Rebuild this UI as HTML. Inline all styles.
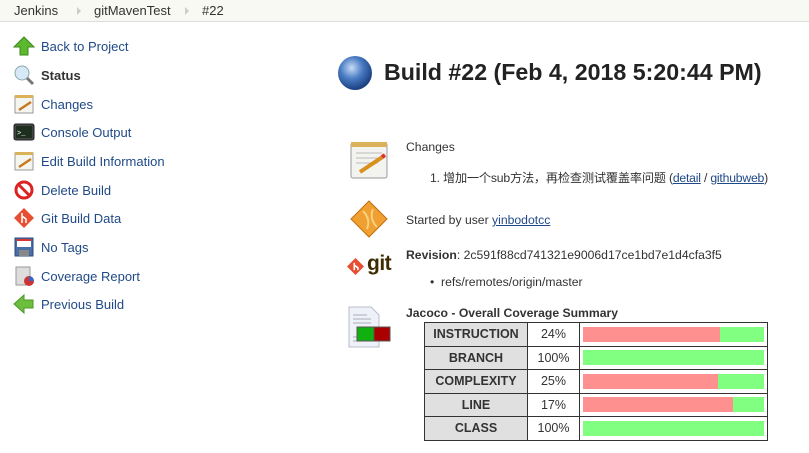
<!DOCTYPE html>
<html><head><meta charset="utf-8"><style>
body{margin:0;width:809px;height:453px;overflow:hidden;background:#fff;font-family:"Liberation Sans","Noto Sans CJK SC",sans-serif;font-size:12.2px;color:#333;position:relative}
.bc{position:absolute;left:0;top:0;width:809px;height:21px;background:#f8f9f3;border-bottom:1px solid #ddd}
.bc span{position:absolute;top:3px;font-size:13px;color:#333}
.bc i{position:absolute;top:7px;width:0;height:0;border-left:4px solid #ccc;border-top:4px solid transparent;border-bottom:4px solid transparent}
.it{position:absolute;left:41px;color:#204a87;font-size:13px}
.ic{position:absolute;left:13px;width:22px;height:22px}
.a{position:absolute}
a{color:#204a87;text-decoration:underline}
table{position:absolute;left:424px;top:322px;border-collapse:collapse;border:1px solid #bbb;table-layout:fixed;width:344px}
td{border:1px solid #333;height:22.5px;padding:0;font-size:12.5px;text-align:center}
td.h{background:#e0e0e0;font-weight:bold;width:102px}
td.p{width:51px}
td.b{padding:0 3px}
.bar{height:15px;background:#80ff80;position:relative}
.bar div{position:absolute;left:0;top:0;height:15px;background:#ff9090}
</style></head><body>
<div class="bc"><span style="left:14px">Jenkins</span><i style="left:77px"></i><span style="left:94px">gitMavenTest</span><i style="left:185px"></i><span style="left:202px">#22</span></div>

<svg class="ic" style="top:35px" viewBox="0 0 22 22"><path d="M11 2 L21 12 H15 V20 H7 V12 H1 Z" fill="#5cb82e" stroke="#3d8a1e"/></svg>
<div class="it" style="top:39px">Back to Project</div>
<svg class="ic" style="top:64px" viewBox="0 0 22 22"><circle cx="9" cy="9" r="7" fill="#d7e8f7" stroke="#8aa"/><path d="M14 14 L20 20" stroke="#777" stroke-width="3"/></svg>
<div class="it" style="top:68px;font-weight:bold;color:#333">Status</div>
<svg class="ic" style="top:93px" viewBox="0 0 22 22"><rect x="2" y="3" width="18" height="17" fill="#f5f5f0" stroke="#999"/><rect x="2" y="2" width="18" height="3" fill="#d9b25a"/><path d="M6 17 L18 9" stroke="#c87a1e" stroke-width="2.5"/></svg>
<div class="it" style="top:97px">Changes</div>
<svg class="ic" style="top:121px" viewBox="0 0 22 22"><rect x="1" y="3" width="20" height="16" rx="2" fill="#444" stroke="#222"/><rect x="3" y="5" width="16" height="12" fill="#1f2f1f"/><text x="4" y="14" font-size="7" fill="#fff" font-family="Liberation Mono">&gt;_</text></svg>
<div class="it" style="top:125px">Console Output</div>
<svg class="ic" style="top:150px" viewBox="0 0 22 22"><rect x="2" y="3" width="18" height="17" fill="#f5f5f0" stroke="#999"/><rect x="2" y="2" width="18" height="3" fill="#d9b25a"/><path d="M6 17 L18 9" stroke="#c87a1e" stroke-width="2.5"/></svg>
<div class="it" style="top:154px">Edit Build Information</div>
<svg class="ic" style="top:179px" viewBox="0 0 22 22"><circle cx="11" cy="11" r="8" fill="#fff" stroke="#d22" stroke-width="3"/><path d="M5 5 L17 17" stroke="#d22" stroke-width="3"/></svg>
<div class="it" style="top:183px">Delete Build</div>
<svg class="ic" style="top:207px" viewBox="0 0 22 22"><path d="M11 1 L21 11 L11 21 L1 11 Z" fill="#e84e31"/><path d="M9 6 V16 M9 9 L13 12 V16" stroke="#fff" stroke-width="1.5" fill="none"/></svg>
<div class="it" style="top:211px">Git Build Data</div>
<svg class="ic" style="top:236px" viewBox="0 0 22 22"><rect x="2" y="2" width="18" height="18" fill="#4a6ea8" stroke="#2c4a7a"/><rect x="4" y="3" width="14" height="8" fill="#fff"/><rect x="4" y="3" width="14" height="2" fill="#d33"/><rect x="6" y="14" width="10" height="6" fill="#888"/></svg>
<div class="it" style="top:240px">No Tags</div>
<svg class="ic" style="top:265px" viewBox="0 0 22 22"><rect x="3" y="2" width="14" height="18" fill="#ddd" stroke="#999"/><circle cx="16" cy="16" r="5" fill="#c33"/><path d="M16 16 L16 11 A5 5 0 0 1 21 16 Z" fill="#36c"/></svg>
<div class="it" style="top:269px">Coverage Report</div>
<svg class="ic" style="top:293px" viewBox="0 0 22 22"><path d="M1 11 L11 2 V7 H20 V15 H11 V20 Z" fill="#6cbf3c" stroke="#4a9a26"/></svg>
<div class="it" style="top:297px">Previous Build</div>

<svg class="a" style="left:337px;top:55px" width="36" height="36" viewBox="0 0 36 36"><defs><radialGradient id="g" cx="40%" cy="35%" r="65%"><stop offset="0" stop-color="#c8dcf5"/><stop offset=".5" stop-color="#4a7cc4"/><stop offset="1" stop-color="#1a3f80"/></radialGradient></defs><circle cx="18" cy="18" r="17" fill="url(#g)"/></svg>
<div class="a" style="left:384px;top:59px;font-size:23.2px;font-weight:bold;color:#222">Build #22 (Feb 4, 2018 5:20:44 PM)</div>

<svg class="a" style="left:348px;top:139px" width="42" height="42" viewBox="0 0 42 42"><rect x="3" y="4" width="36" height="35" rx="2" fill="#f3f3f0" stroke="#999"/><rect x="3" y="3" width="36" height="5" fill="#d9b25a"/><path d="M8 14H34M8 19H34M8 24H30" stroke="#bbb"/><path d="M12 33 L36 17" stroke="#d8901e" stroke-width="4"/><path d="M34 18 L37 16" stroke="#d33" stroke-width="4"/></svg>
<div class="a" style="left:406px;top:140px">Changes</div>
<div class="a" style="left:430px;top:168px;letter-spacing:-0.2px">1. 增加一个sub方法，再检查测试覆盖率问题 (<a>detail</a> / <a>githubweb</a>)</div>

<svg class="a" style="left:349px;top:199px" width="40" height="42" viewBox="0 0 40 42"><path d="M20 2 L38 20 L20 38 L2 20 Z" fill="#f0a030" stroke="#c07010"/><path d="M14 12 Q22 20 18 30 M24 10 Q20 20 28 28" stroke="#f8d080" stroke-width="2" fill="none"/></svg>
<div class="a" style="left:406px;top:213px">Started by user <a>yinbodotcc</a></div>

<div class="a" style="left:347px;top:258px;width:17px;height:17px"><svg width="17" height="17" viewBox="0 0 14 14"><path d="M7 0 L14 7 L7 14 L0 7 Z" fill="#e84e31"/><path d="M6 4V10M6 6L9 8V10" stroke="#fff" stroke-width="1.3" fill="none"/></svg></div>
<div class="a" style="left:367px;top:252px;font-size:21px;font-weight:bold;color:#3e2c00;letter-spacing:-0.5px">git</div>
<div class="a" style="left:406px;top:248px"><b>Revision</b>: 2c591f88cd741321e9006d17ce1bd7e1d4cfa3f5</div>
<div class="a" style="left:430px;top:275px">• &nbsp;refs/remotes/origin/master</div>

<svg class="a" style="left:347px;top:305px" width="44" height="44" viewBox="0 0 44 44"><path d="M2 2 H24 L32 10 V42 H2 Z" fill="#eef2f8" stroke="#bbc"/><path d="M6 10H20M6 14H24M6 18H24M6 32H12M6 36H12" stroke="#aab"/><rect x="10" y="22" width="17" height="14" fill="#10b010" stroke="#555"/><rect x="27" y="22" width="16" height="14" fill="#a00" stroke="#555"/></svg>
<div class="a" style="left:406px;top:306px;font-weight:bold">Jacoco - Overall Coverage Summary</div>
<table>
<tr><td class="h">INSTRUCTION</td><td class="p">24%</td><td class="b"><div class="bar"><div style="width:137px"></div></div></td></tr>
<tr><td class="h">BRANCH</td><td class="p">100%</td><td class="b"><div class="bar"></div></td></tr>
<tr><td class="h">COMPLEXITY</td><td class="p">25%</td><td class="b"><div class="bar"><div style="width:135px"></div></div></td></tr>
<tr><td class="h">LINE</td><td class="p">17%</td><td class="b"><div class="bar"><div style="width:150px"></div></div></td></tr>
<tr><td class="h">CLASS</td><td class="p">100%</td><td class="b"><div class="bar"></div></td></tr>
</table>
</body></html>
